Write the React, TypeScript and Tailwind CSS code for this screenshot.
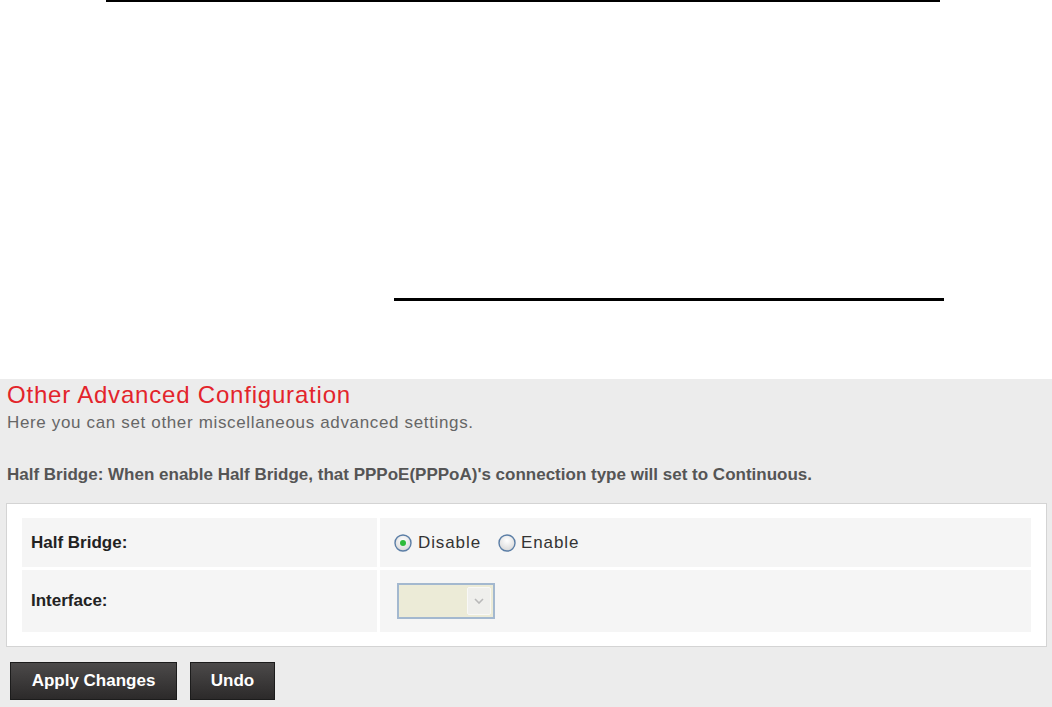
import { useState } from "react";

const font = { fontFamily: '"Liberation Sans", Arial, sans-serif' };

function Radio({ checked }: { checked: boolean }) {
  return (
    <svg width="18" height="18" viewBox="0 0 18 18" className="shrink-0">
      <defs>
        <radialGradient id="rg" cx="50%" cy="35%" r="65%">
          <stop offset="0%" stopColor="#ffffff" />
          <stop offset="100%" stopColor="#d8d8d8" />
        </radialGradient>
      </defs>
      <circle cx="9" cy="9" r="8" fill="url(#rg)" stroke="#5b7ea6" strokeWidth="1.4" />
      {checked && <circle cx="9" cy="9" r="3" fill="#2dbb3a" />}
    </svg>
  );
}

export default function App() {
  const [mode, setMode] = useState<"disable" | "enable">("disable");

  return (
    <div className="w-[1052px] h-[707px] bg-white overflow-hidden" style={font}>
      {/* decorative rules above the panel */}
      <div className="ml-[106px] w-[834px] h-[2px] bg-black" />
      <div className="mt-[296px] ml-[394px] w-[550px] h-[3px] bg-black" />

      {/* Content panel */}
      <div className="mt-[78px] h-[328px] bg-[#ececec] pt-[4px]">
        <h1 className="pl-[7px] text-[24px] leading-[24px] text-[#e3242b] tracking-[0.8px]">
          Other Advanced Configuration
        </h1>
        <p className="mt-[6px] pl-[7px] text-[17px] leading-[20px] text-[#666] tracking-[0.65px]">
          Here you can set other miscellaneous advanced settings.
        </p>
        <p className="mt-[32px] pl-[7px] text-[17px] leading-[20px] font-bold text-[#555]">
          Half Bridge: When enable Half Bridge, that PPPoE(PPPoA)'s connection type will set to Continuous.
        </p>

        <div className="mt-[18px] ml-[6px] w-[1041px] border border-[#d4d4d4] bg-white px-[15px] py-[14px]">
          <div className="grid grid-cols-[355px_1fr] gap-[3px]">
            <div className="h-[49px] bg-[#f5f5f5] flex items-center pl-[9px] text-[17px] font-bold text-[#222]">
              Half Bridge:
            </div>
            <div className="h-[49px] bg-[#f5f5f5] flex items-center pl-[14px] text-[17px] text-[#333] tracking-[0.9px]">
              <label className="flex items-center gap-[6px] cursor-pointer" onClick={() => setMode("disable")}>
                <Radio checked={mode === "disable"} />
                Disable
              </label>
              <label className="ml-[17px] flex items-center gap-[5px] cursor-pointer" onClick={() => setMode("enable")}>
                <Radio checked={mode === "enable"} />
                Enable
              </label>
            </div>
            <div className="h-[62px] bg-[#f5f5f5] flex items-center pl-[9px] text-[17px] font-bold text-[#222]">
              Interface:
            </div>
            <div className="h-[62px] bg-[#f5f5f5] flex items-center pl-[17px]">
              <div className="w-[98px] h-[36px] border-2 border-[#a3b8cf] bg-[#ecebd7] flex justify-end items-center pr-[2px]">
                <div className="w-[24px] h-[28px] bg-[#efefec] border border-[#f8f8f6] rounded-[2px] flex items-center justify-center">
                  <svg width="10" height="6" viewBox="0 0 10 6">
                    <path d="M1 1 L5 5 L9 1" fill="none" stroke="#b9b9b9" strokeWidth="1.6" />
                  </svg>
                </div>
              </div>
            </div>
          </div>
        </div>

        <div className="mt-[15px] ml-[10px] flex gap-[13px]">
          <button className="w-[167px] h-[38px] border border-[#1c1c1c] bg-gradient-to-b from-[#4c4a4a] to-[#2c2a2a] text-white text-[17px] font-bold">
            Apply Changes
          </button>
          <button className="w-[85px] h-[38px] border border-[#1c1c1c] bg-gradient-to-b from-[#4c4a4a] to-[#2c2a2a] text-white text-[17px] font-bold">
            Undo
          </button>
        </div>
      </div>
    </div>
  );
}
